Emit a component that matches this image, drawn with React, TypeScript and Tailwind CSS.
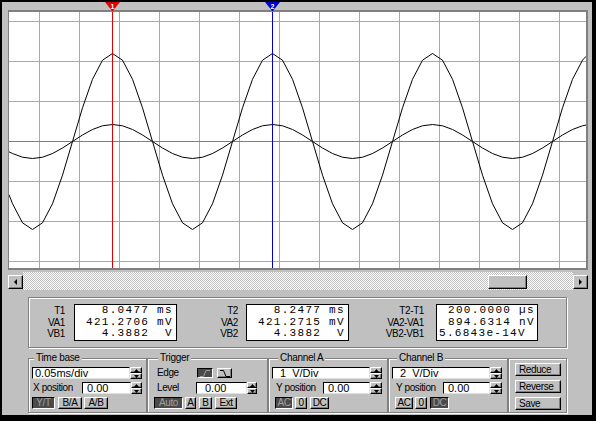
import React from "react";

const W = 577;
const H = 256;

function wavePoints(amp: number): string {
  const xs: number[] = [0];
  for (let x = 3.5; x <= W; x += 10) xs.push(x);
  xs.push(W);
  return xs
    .map((x) => `${x},${(129.5 - amp * Math.cos((2 * Math.PI * (x - 103.5)) / 160)).toFixed(2)}`)
    .join(" ");
}

const RAISED =
  "bg-[#c0c0c0] border border-t-white border-l-white border-r-black border-b-black shadow-[inset_-1px_-1px_0_#808080]";
const PRESSED =
  "bg-[#4a4a4a] text-[#a0a0a0] border border-t-black border-l-black border-r-white border-b-white";
const INPUT =
  "bg-white border border-t-black border-l-black border-r-[#e0e0e0] border-b-[#e0e0e0] text-[11px] leading-[10px] flex items-center whitespace-pre";
const LABEL = "text-[10px] tracking-[-0.4px] leading-[12px]";
const ETCH = "border border-[#808080] shadow-[inset_1px_1px_0_#fff,1px_1px_0_#fff]";
const LEGEND = "px-[2px] text-[10px] tracking-[-0.3px] leading-[12px] bg-[#c0c0c0]";

function Spinner({ w }: { w: string }) {
  return (
    <div className={`flex flex-col h-[12px] ${w}`}>
      <div className={`h-[6px] ${RAISED} flex items-center justify-center`}>
        <svg width="5" height="3" className="block">
          <path d="M2.5 0L5 3H0z" fill="black" />
        </svg>
      </div>
      <div className={`h-[6px] ${RAISED} flex items-center justify-center`}>
        <svg width="5" height="3" className="block">
          <path d="M0 0H5L2.5 3z" fill="black" />
        </svg>
      </div>
    </div>
  );
}

function Btn({ label, w, pressed, cls = "" }: { label: string; w: string; pressed?: boolean; cls?: string }) {
  return (
    <div
      className={`h-[12px] ${w} ${cls} ${pressed ? PRESSED : RAISED} flex items-center justify-center text-[10px] tracking-[-0.4px] leading-[10px]`}
    >
      {label}
    </div>
  );
}

function Marker({ n, color, left }: { n: string; color: string; left: string }) {
  return (
    <svg className={`absolute top-0 ${left}`} width="15" height="10" overflow="visible">
      <polygon points="0,0 15,0 7.5,9.5" fill={color} />
      <text
        x="7.5"
        y="6.5"
        fontSize="7"
        fontWeight="bold"
        fill="white"
        textAnchor="middle"
        fontFamily="Liberation Sans, Arial, sans-serif"
      >
        {n}
      </text>
    </svg>
  );
}

function ValueBox({ rows, w, pads }: { rows: string[]; w: string; pads: string[] }) {
  return (
    <div className={`${w} h-[37px] bg-white border border-black flex flex-col font-['Liberation_Mono',monospace] text-[11px] tracking-[1.3px]`}>
      {rows.map((r, i) => (
        <div key={i} className={`h-[11.67px] leading-[11.67px] whitespace-pre ${pads[i]}`}>
          {r}
        </div>
      ))}
    </div>
  );
}

function Labels({ rows, w }: { rows: string[]; w: string }) {
  return (
    <div className={`${w} flex flex-col text-right text-[10px] tracking-[-0.4px]`}>
      {rows.map((r, i) => (
        <div key={i} className="h-[11.67px] leading-[11.67px]">
          {r}
        </div>
      ))}
    </div>
  );
}

function Rising({ color }: { color: string }) {
  return (
    <svg width="10" height="7" className="block">
      <path d="M0 6.5H3.5L6 0.5H10" stroke={color} fill="none" strokeWidth="1" />
    </svg>
  );
}
function Falling({ color }: { color: string }) {
  return (
    <svg width="10" height="7" className="block">
      <path d="M0 0.5H3.5L6 6.5H10" stroke={color} fill="none" strokeWidth="1" />
    </svg>
  );
}

export default function App() {
  const big = wavePoints(88);
  const small = wavePoints(17);
  return (
    <div className="w-[596px] h-[421px] bg-black pt-[2px] pl-[2px] font-['Liberation_Sans',Arial,sans-serif] text-black">
      <div className="w-[590px] h-[413px] bg-[#c0c0c0] flex flex-col">
        {/* cursor marker band */}
        <div className="relative h-[8px] shrink-0">
          <Marker n="1" color="#e00000" left="left-[103px]" />
          <Marker n="2" color="#0000d0" left="left-[263px]" />
        </div>

        {/* screen */}
        <div className="ml-[6px] w-[580px] h-[260px] shrink-0 bg-white border-l border-t-2 border-r-2 border-b-2 border-[#808080]">
          <svg width={W} height={H} className="block">
            {Array.from({ length: 14 }, (_, i) => (
              <line key={`v${i}`} x1={30.5 + 40 * i} y1={0} x2={30.5 + 40 * i} y2={H} stroke="#a8a8a8" />
            ))}
            {[9.5, 49.5, 89.5, 169.5, 209.5, 249.5].map((y) => (
              <line key={`h${y}`} x1={0} y1={y} x2={W} y2={y} stroke="#a8a8a8" />
            ))}
            <line x1={0} y1={129.5} x2={W} y2={129.5} stroke="#808080" />
            <polyline points={big} fill="none" stroke="black" strokeWidth="1" />
            <polyline points={small} fill="none" stroke="black" strokeWidth="1" />
            <line x1={103.5} y1={0} x2={103.5} y2={H} stroke="#e00000" />
            <line x1={263.5} y1={0} x2={263.5} y2={H} stroke="#0000d0" />
          </svg>
        </div>

        {/* scrollbar */}
        <div className="ml-[6px] mt-[2px] w-[580px] h-[18px] shrink-0 flex">
          <div className={`mt-[3px] w-[15px] h-[14px] ${RAISED} flex items-center justify-center`}>
            <svg width="3" height="6" className="block">
              <path d="M3 0V6L0 3z" fill="black" />
            </svg>
          </div>
          <div className="w-[550px] h-[18px] pt-[3px] pl-[465px] [background-image:repeating-conic-gradient(#c0c0c0_0_25%,#ffffff_0_50%)] [background-size:2px_2px]">
            <div className={`w-[39px] h-[14px] ${RAISED}`} />
          </div>
          <div className={`mt-[3px] w-[15px] h-[14px] ${RAISED} flex items-center justify-center`}>
            <svg width="3" height="6" className="block">
              <path d="M0 0V6L3 3z" fill="black" />
            </svg>
          </div>
        </div>

        {/* measurement panel */}
        <div className={`ml-[26px] mt-[7px] w-[539px] h-[51px] shrink-0 flex items-center ${ETCH}`}>
          <Labels w="w-[36px]" rows={["T1", "VA1", "VB1"]} />
          <div className="ml-[9px]">
            <ValueBox
              w="w-[103px]"
              rows={["  8.0477 ms", "421.2706 mV", "  4.3882  V"]}
              pads={["pl-[11px]", "pl-[11px]", "pl-[11px]"]}
            />
          </div>
          <Labels w="w-[61px]" rows={["T2", "VA2", "VB2"]} />
          <div className="ml-[8px]">
            <ValueBox
              w="w-[103px]"
              rows={["  8.2477 ms", "421.2715 mV", "  4.3882  V"]}
              pads={["pl-[11px]", "pl-[11px]", "pl-[11px]"]}
            />
          </div>
          <Labels w="w-[75px]" rows={["T2-T1", "VA2-VA1", "VB2-VB1"]} />
          <div className="ml-[12px]">
            <ValueBox
              w="w-[102px]"
              rows={["200.0000 µs", "894.6314 nV", "5.6843e-14V"]}
              pads={["pl-[11px]", "pl-[11px]", "pl-[2px]"]}
            />
          </div>
        </div>

        {/* controls */}
        <div className="ml-[26px] mt-[4px] w-[539px] h-[61px] shrink-0 flex">
          {/* Time base */}
          <fieldset className={`w-[119px] h-[61px] px-[3px] ${ETCH}`}>
            <legend className={`ml-[2px] ${LEGEND}`}>Time base</legend>
            <div className="mt-[3px] flex flex-col gap-[3px]">
              <div className="flex h-[12px]">
                <div className={`w-[98px] h-[12px] pl-[2px] ${INPUT}`}>0.05ms/div</div>
                <Spinner w="w-[12px]" />
              </div>
              <div className="flex h-[12px] items-center">
                <div className={`w-[50px] pl-[1px] ${LABEL}`}>X position</div>
                <div className={`w-[49px] h-[12px] pl-[4px] ${INPUT}`}>0.00</div>
                <Spinner w="w-[11px]" />
              </div>
              <div className="flex h-[12px]">
                <Btn label="Y/T" w="w-[23px]" pressed />
                <Btn label="B/A" w="w-[24px]" cls="ml-[3px]" />
                <Btn label="A/B" w="w-[24px]" cls="ml-[2px]" />
              </div>
            </div>
          </fieldset>

          {/* Trigger */}
          <fieldset className={`w-[121px] h-[61px] px-[3px] ${ETCH}`}>
            <legend className={`ml-[7px] ${LEGEND}`}>Trigger</legend>
            <div className="mt-[3px] flex flex-col gap-[3px]">
              <div className="flex h-[12px] items-center">
                <div className={`w-[46px] pl-[6px] ${LABEL}`}>Edge</div>
                <div className={`w-[16px] h-[10px] ${PRESSED} flex items-center justify-center`}>
                  <Rising color="#a0a0a0" />
                </div>
                <div className={`ml-[4px] w-[15px] h-[10px] ${RAISED} flex items-center justify-center`}>
                  <Falling color="black" />
                </div>
              </div>
              <div className="flex h-[12px] items-center">
                <div className={`w-[45px] pl-[6px] ${LABEL}`}>Level</div>
                <div className={`w-[51px] h-[12px] pl-[8px] ${INPUT}`}>0.00</div>
                <Spinner w="w-[10px]" />
              </div>
              <div className="flex h-[12px]">
                <Btn label="Auto" w="w-[29px]" pressed cls="ml-[3px]" />
                <Btn label="A" w="w-[11px]" cls="ml-[2px]" />
                <Btn label="B" w="w-[13px]" cls="ml-[3px]" />
                <Btn label="Ext" w="w-[22px]" cls="ml-[3px]" />
              </div>
            </div>
          </fieldset>

          {/* Channel A */}
          <fieldset className={`w-[120px] h-[61px] px-[3px] ${ETCH}`}>
            <legend className={`ml-[6px] ${LEGEND}`}>Channel A</legend>
            <div className="mt-[3px] flex flex-col gap-[3px]">
              <div className="flex h-[12px]">
                <div className={`w-[98px] h-[12px] pl-[7px] ${INPUT}`}>1  V/Div</div>
                <Spinner w="w-[12px]" />
              </div>
              <div className="flex h-[12px] items-center">
                <div className={`w-[51px] pl-[4px] ${LABEL}`}>Y position</div>
                <div className={`w-[47px] h-[12px] pl-[4px] ${INPUT}`}>0.00</div>
                <Spinner w="w-[12px]" />
              </div>
              <div className="flex h-[12px]">
                <Btn label="AC" w="w-[18px]" pressed cls="ml-[3px]" />
                <Btn label="0" w="w-[12px]" cls="ml-[2px]" />
                <Btn label="DC" w="w-[19px]" cls="ml-[3px]" />
              </div>
            </div>
          </fieldset>

          {/* Channel B */}
          <fieldset className={`w-[120px] h-[61px] px-[3px] ${ETCH}`}>
            <legend className={`ml-[5px] ${LEGEND}`}>Channel B</legend>
            <div className="mt-[3px] flex flex-col gap-[3px]">
              <div className="flex h-[12px]">
                <div className={`w-[98px] h-[12px] pl-[7px] ${INPUT}`}>2  V/Div</div>
                <Spinner w="w-[12px]" />
              </div>
              <div className="flex h-[12px] items-center">
                <div className={`w-[51px] pl-[4px] ${LABEL}`}>Y position</div>
                <div className={`w-[47px] h-[12px] pl-[4px] ${INPUT}`}>0.00</div>
                <Spinner w="w-[12px]" />
              </div>
              <div className="flex h-[12px]">
                <Btn label="AC" w="w-[18px]" cls="ml-[3px]" />
                <Btn label="0" w="w-[12px]" cls="ml-[2px]" />
                <Btn label="DC" w="w-[19px]" pressed cls="ml-[3px]" />
              </div>
            </div>
          </fieldset>

          {/* Buttons */}
          <fieldset className={`mt-[6px] w-[59px] h-[55px] pl-[6px] pt-[4px] ${ETCH}`}>
            <div className="flex flex-col gap-[4px]">
              {["Reduce", "Reverse", "Save"].map((t) => (
                <div
                  key={t}
                  className={`w-[46px] h-[13px] pl-[3px] ${RAISED} flex items-center text-[10px] tracking-[-0.4px] leading-[10px]`}
                >
                  {t}
                </div>
              ))}
            </div>
          </fieldset>
        </div>
      </div>
    </div>
  );
}
